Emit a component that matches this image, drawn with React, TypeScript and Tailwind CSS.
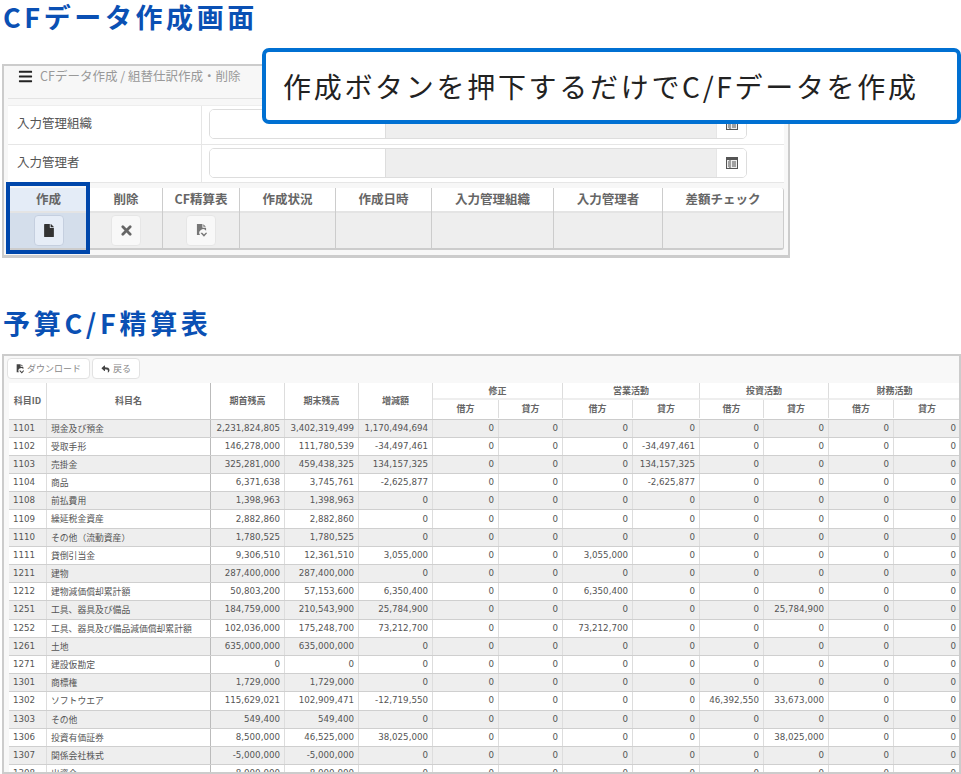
import React from "react";
import { FaBars, FaFile, FaReply } from "react-icons/fa";

const jp = "font-['Noto_Sans_CJK_JP','Noto_Sans',sans-serif]";
const cell = "font-['DejaVu_Sans','Noto_Sans_CJK_JP',sans-serif]";

function FileDl({ className }: { className?: string }) {
  return (
    <svg viewBox="0 0 12 14" className={className} fill="currentColor">
      <path d="M1 0h6v4h4v3.4A3.8 3.8 0 0 0 4.4 12H1z" />
      <path d="M8 0.2 10.8 3H8z" />
      <path d="M5.2 9.4h1.6l1.9 2 1.9-2h1.4v.6l-3.3 3.7-3.5-3.7z" />
    </svg>
  );
}

function CrossIcon() {
  return (
    <svg viewBox="0 0 12 12" className="w-[11px] h-[11px]">
      <path d="M2 2l8 8M10 2l-8 8" stroke="#666" strokeWidth="3" strokeLinecap="round" />
    </svg>
  );
}

function TableIcon() {
  return (
    <svg viewBox="0 0 12 12" className="w-[12px] h-[12px]">
      <rect x="0.5" y="0.5" width="11" height="11" fill="#eee" stroke="#555" />
      <rect x="0.5" y="0.5" width="11" height="2.5" fill="#555" />
      <path d="M4 3v8.5M6 5h4M6 7h4M6 9h4M2 5h1M2 7h1M2 9h1" stroke="#555" strokeWidth="1" />
    </svg>
  );
}

function InputRow({ label }: { label: string }) {
  return (
    <div className="flex h-[38.5px] border-b border-[#e6e6e6] bg-white">
      <div className="w-[194px] flex items-center pl-[9px] pb-[2px] text-[12.5px] text-[#555] border-r border-[#e6e6e6]">{label}</div>
      <div className="flex-1 flex items-center pl-[7px] pb-[1px]">
        <div className="flex h-[30px] w-[538px] border border-[#ddd] rounded-[5px] overflow-hidden">
          <div className="w-[176px] bg-white border-r border-[#ddd]" />
          <div className="flex-1 bg-[#eeeeee]" />
          <div className="w-[30px] bg-white border-l border-[#e6e6e6] flex items-center justify-center">
            <TableIcon />
          </div>
        </div>
      </div>
    </div>
  );
}

const topCols = [
  { w: "w-[82px]", t: "作成" },
  { w: "w-[73px]", t: "削除" },
  { w: "w-[77px]", t: "CF精算表" },
  { w: "w-[96px]", t: "作成状況" },
  { w: "w-[96px]", t: "作成日時" },
  { w: "w-[122px]", t: "入力管理組織" },
  { w: "w-[109px]", t: "入力管理者" },
  { w: "flex-1", t: "差額チェック" },
];

function IconBtn({ active, children }: { active?: boolean; children: React.ReactNode }) {
  return (
    <div
      className={
        "w-[30px] h-[31px] rounded-[4px] border flex items-center justify-center " +
        (active ? "bg-[#e6edf7] border-[#c5cfdf]" : "bg-[#f8f8f8] border-[#e6e6e6]")
      }
    >
      {children}
    </div>
  );
}

function TopPanel() {
  return (
    <div className="relative mx-[2px] mt-[18px] w-[788px] h-[194px] border-[2px] border-b-[3px] border-[#cccccc] bg-[#f7f7f7] px-[4px]">
      <div className="h-[33px] flex items-center gap-[7px] border-b border-[#e3e3e3] pl-[10px] pb-[11px]">
        <FaBars className="w-[15px] h-[15px] text-[#222]" />
        <span className="text-[12.5px] text-[#999]">CFデータ作成 / 組替仕訳作成・削除</span>
      </div>
      <div className="mt-[6px] border-t border-[#eeeeee]">
        <InputRow label="入力管理組織" />
        <InputRow label="入力管理者" />
      </div>
      <div className="mt-[5px] h-[62px] rounded-[3px] border-b-2 border-r border-[#ccc] flex overflow-hidden">
        {topCols.map((c, i) => (
          <div key={c.t} className={c.w + " flex flex-col border-r border-[#ccc] last:border-r-0"}>
            <div
              className={
                "h-[25px] flex items-center justify-center border-b-2 border-[#e4e4e4] text-[12.5px] font-bold text-[#666] " +
                (i === 0 ? "bg-[#e4ecf7]" : "bg-white")
              }
            >
              {c.t}
            </div>
            <div className={"flex-1 flex items-center justify-center " + (i === 0 ? "bg-[#d4deeb]" : "bg-[#eeeeee]")}>
              {i === 0 && (
                <IconBtn active>
                  <FaFile className="w-[10px] h-[13px] text-[#333]" />
                </IconBtn>
              )}
              {i === 1 && (
                <IconBtn>
                  <CrossIcon />
                </IconBtn>
              )}
              {i === 2 && (
                <IconBtn>
                  <FileDl className="w-[11px] h-[13px] text-[#777]" />
                </IconBtn>
              )}
            </div>
          </div>
        ))}
      </div>
      <div className="absolute left-[2px] top-[116px] w-[84px] h-[72px] border-[4px] border-[#0047ab]" />
    </div>
  );
}

type Row = [string, string, string, string, string, string?, string?, string?, string?, string?, string?];
const rows: Row[] = [
  ["1101", "現金及び預金", "2,231,824,805", "3,402,319,499", "1,170,494,694"],
  ["1102", "受取手形", "146,278,000", "111,780,539", "-34,497,461", "0", "0", "0", "-34,497,461"],
  ["1103", "売掛金", "325,281,000", "459,438,325", "134,157,325", "0", "0", "0", "134,157,325"],
  ["1104", "商品", "6,371,638", "3,745,761", "-2,625,877", "0", "0", "0", "-2,625,877"],
  ["1108", "前払費用", "1,398,963", "1,398,963", "0"],
  ["1109", "繰延税金資産", "2,882,860", "2,882,860", "0"],
  ["1110", "その他（流動資産）", "1,780,525", "1,780,525", "0"],
  ["1111", "貸倒引当金", "9,306,510", "12,361,510", "3,055,000", "0", "0", "3,055,000", "0"],
  ["1211", "建物", "287,400,000", "287,400,000", "0"],
  ["1212", "建物減価償却累計額", "50,803,200", "57,153,600", "6,350,400", "0", "0", "6,350,400", "0"],
  ["1251", "工具、器具及び備品", "184,759,000", "210,543,900", "25,784,900", "0", "0", "0", "0", "0", "25,784,900"],
  ["1252", "工具、器具及び備品減価償却累計額", "102,036,000", "175,248,700", "73,212,700", "0", "0", "73,212,700", "0"],
  ["1261", "土地", "635,000,000", "635,000,000", "0"],
  ["1271", "建設仮勘定", "0", "0", "0"],
  ["1301", "商標権", "1,729,000", "1,729,000", "0"],
  ["1302", "ソフトウエア", "115,629,021", "102,909,471", "-12,719,550", "0", "0", "0", "0", "46,392,550", "33,673,000"],
  ["1303", "その他", "549,400", "549,400", "0"],
  ["1306", "投資有価証券", "8,500,000", "46,525,000", "38,025,000", "0", "0", "0", "0", "0", "38,025,000"],
  ["1307", "関係会社株式", "-5,000,000", "-5,000,000", "0"],
  ["1308", "出資金", "8,000,000", "8,000,000", "0"],
];

const gridCols = "grid grid-cols-[38px_164px_74px_74px_74px_66px_64px_70px_67px_64px_65px_65px_67px]";
const hCell = "flex items-center justify-center font-bold text-[9px] text-[#666] border-r border-[#dddddd]";

function SheetTable() {
  return (
    <div className={"ml-[5px] w-[952px] " + jp}>
      <div className={gridCols + " h-[36.5px] bg-white border-b border-[#cccccc]"}>
        <div className={hCell + " row-span-2"}>科目ID</div>
        <div className={hCell + " row-span-2 border-r-[#bbbbbb]"}>科目名</div>
        <div className={hCell + " row-span-2"}>期首残高</div>
        <div className={hCell + " row-span-2"}>期末残高</div>
        <div className={hCell + " row-span-2"}>増減額</div>
        <div className={hCell + " col-span-2 border-b-2 border-b-[#eeeeee]"}>修正</div>
        <div className={hCell + " col-span-2 border-b-2 border-b-[#eeeeee]"}>営業活動</div>
        <div className={hCell + " col-span-2 border-b-2 border-b-[#eeeeee]"}>投資活動</div>
        <div className={hCell + " col-span-2 border-b-2 border-b-[#eeeeee]"}>財務活動</div>
        {["借方", "貸方", "借方", "貸方", "借方", "貸方", "借方", "貸方"].map((t, i) => (
          <div key={i} className={hCell + " h-[18px]"}>{t}</div>
        ))}
      </div>
      {rows.map((r, idx) => {
        const vals: string[] = [];
        for (let i = 0; i < 8; i++) vals.push(r[5 + i] === undefined ? "0" : (r[5 + i] as string));
        return (
          <div
            key={r[0]}
            className={gridCols + " h-[18.2px] border-b border-[#cfcfcf] " + (idx % 2 === 0 ? "bg-[#eeeeee]" : "bg-white")}
          >
            <div className={"flex items-center pl-[4px] border-r border-[#dddddd] text-[8.7px] text-[#555] " + cell}>{r[0]}</div>
            <div className="flex items-center pl-[4px] border-r border-[#bbbbbb] text-[8.8px] text-[#555] whitespace-nowrap">{r[1]}</div>
            {[r[2], r[3], r[4], ...vals].map((v, i) => (
              <div
                key={i}
                className={"flex items-center justify-end pr-[4px] border-r border-[#dddddd] text-[8.7px] text-[#555] whitespace-nowrap " + cell}
              >
                {v}
              </div>
            ))}
          </div>
        );
      })}
    </div>
  );
}

export default function App() {
  return (
    <div className={"relative w-[961px] h-[774px] overflow-hidden bg-white " + jp}>
      <h1 className="pl-[3px] h-[46px] text-[27px] leading-[34px] font-bold tracking-[3.6px] text-[#0a50b4]">CFデータ作成画面</h1>
      <TopPanel />
      <h1 className="pl-[3px] mt-[42px] h-[46px] text-[27px] leading-[46px] font-bold tracking-[3.7px] text-[#0a50b4]">予算C/F精算表</h1>
      <div className="ml-[2px] mt-[8px] w-[959px] h-[420px] border-[2px] border-[#cccccc] bg-[#f8f8f8] overflow-hidden">
        <div className="h-[27px] flex items-start pt-[2px] gap-[2px] pl-[3px]">
          <div className="h-[21px] w-[83px] bg-white border border-[#e2e2e2] rounded-[4px] flex items-center justify-center gap-[3px] text-[9px] text-[#888]">
            <FileDl className="w-[8px] h-[10px] text-[#444]" />
            ダウンロード
          </div>
          <div className="h-[21px] w-[48px] bg-white border border-[#e2e2e2] rounded-[4px] flex items-center justify-center gap-[3px] text-[9px] text-[#888]">
            <FaReply className="w-[9px] h-[8px] text-[#444]" />
            戻る
          </div>
        </div>
        <SheetTable />
      </div>
      <div className="absolute left-[262px] top-[48px] w-[699px] h-[76px] bg-white border-[4px] border-[#0070d2] rounded-[7px] flex items-center pl-[17px] text-[28px] font-normal tracking-[2.7px] text-[#222]">
        作成ボタンを押下するだけでC/Fデータを作成
      </div>
    </div>
  );
}
